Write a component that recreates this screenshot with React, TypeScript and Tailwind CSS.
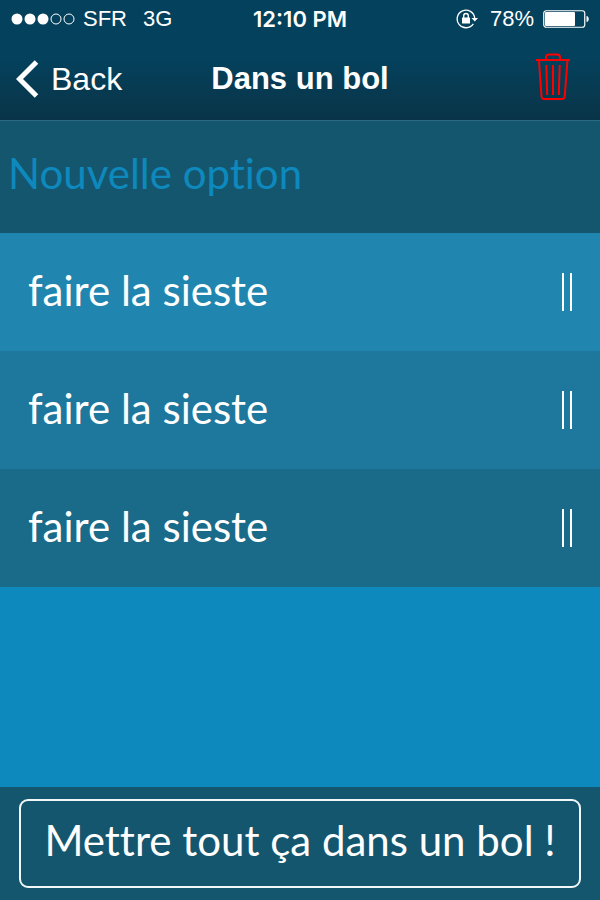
import { useState } from "react";

const options = ["faire la sieste", "faire la sieste", "faire la sieste"];
const rowColors = ["bg-[#2186af]", "bg-[#1e779c]", "bg-[#1a6a8a]"];

function SignalDots() {
  return (
    <svg width="64" height="12" viewBox="0 0 64 12" aria-hidden="true">
      {[6, 19, 32].map((x) => (
        <circle key={x} cx={x} cy="6" r="5.5" fill="#fff" />
      ))}
      {[45, 58].map((x) => (
        <circle key={x} cx={x} cy="6" r="5" fill="none" stroke="#fff" strokeWidth="1" />
      ))}
    </svg>
  );
}

function RotationLock() {
  return (
    <svg width="22" height="20" viewBox="0 0 22 20" fill="none" aria-hidden="true">
      <path d="M17.300 14.800A8.800 8.800 0 1 1 18.700 9" stroke="#fff" strokeWidth="1.300" />
      <path d="M15.500 9H22l-3.200 3.500z" fill="#fff" />
      <rect x="6" y="8.500" width="8" height="6" rx="0.500" fill="#fff" />
      <path d="M7.700 9V6.800a2.300 2.300 0 0 1 4.600 0V9" stroke="#fff" strokeWidth="1.400" />
    </svg>
  );
}

function Battery() {
  return (
    <svg width="46" height="18" viewBox="0 0 46 18" aria-hidden="true">
      <rect x="0.750" y="0.750" width="41" height="16.500" rx="2.500" fill="none" stroke="#fff" strokeWidth="1.200" />
      <rect x="2" y="2" width="30" height="14" rx="1" fill="#fff" />
      <path d="M43.500 6c3 .4 3 5.600 0 6z" fill="#fff" />
    </svg>
  );
}

function StatusBar() {
  return (
    <div className="grid h-[38px] grid-cols-[1fr_auto_1fr] items-center px-[11px] text-[22px] leading-6">
      <div className="flex items-center">
        <SignalDots />
        <span className="ml-2">SFR</span>
        <span className="ml-4">3G</span>
      </div>
      <span className="font-['Inter','Liberation_Sans',sans-serif] font-semibold">12:10 PM</span>
      <div className="flex items-center justify-end">
        <RotationLock />
        <span className="mr-[9px] ml-3">78%</span>
        <Battery />
      </div>
    </div>
  );
}

function NavBar() {
  return (
    <div className="grid h-[82px] grid-cols-[1fr_auto_1fr] items-center">
      <button type="button" className="flex items-center gap-3 justify-self-start pl-4 text-[32px] leading-10">
        <svg width="23" height="38" viewBox="0 0 23 38" fill="none" aria-hidden="true">
          <path d="M20.500 2L3.500 19l17 17" stroke="#fff" strokeWidth="5" />
        </svg>
        Back
      </button>
      <h1 className="text-[31px] leading-10 font-bold">Dans un bol</h1>
      <button type="button" aria-label="Supprimer" className="mr-[29px] justify-self-end pb-1">
        <svg width="36" height="48" viewBox="0 0 36 48" fill="none" stroke="#ff0000" strokeWidth="2" aria-hidden="true">
          <path d="M1 7h34" />
          <path d="M11 7V4.500Q11 1.500 14 1.500h8Q25 1.500 25 4.500V7" />
          <path d="M4 7.500l2.500 36Q6.800 46 9 46h18Q29.400 46 29.700 43.500L32.500 7.500" />
          <path d="M11.300 12l.9 30M18 12v30M24.700 12l-.9 30" />
        </svg>
      </button>
    </div>
  );
}

export default function App() {
  const [value, setValue] = useState("");
  return (
    <div className="flex min-h-screen flex-col bg-[#0e89bd] font-['Liberation_Sans',Arial,sans-serif] text-white">
      <header className="border-b border-[#2d6b85] bg-linear-to-b from-[#04415c] from-50% to-[#093447]">
        <StatusBar />
        <NavBar />
      </header>
      <main className="flex flex-1 flex-col font-['Lato',sans-serif] text-[42px] leading-[56px] [font-variant-ligatures:none]">
        <input
          type="text"
          aria-label="Nouvelle option"
          placeholder="Nouvelle option"
          value={value}
          onChange={(e) => setValue(e.target.value)}
          className="h-28 w-full bg-[#15566f] px-2 pb-2 text-white outline-none [font-variant-ligatures:none] placeholder:text-[#0e89bd] placeholder:opacity-100"
        />
        <ul>
          {options.map((option, i) => (
            <li key={i} className={`flex h-[118px] items-center justify-between px-7 ${rowColors[i]}`}>
              <span className="pb-1">{option}</span>
              <button type="button" aria-label="Déplacer" className="flex h-[38px] w-[10px] justify-between border-x-2 border-white" />
            </li>
          ))}
        </ul>
      </main>
      <footer className="bg-[#15566f] px-[19px] py-3 font-['Lato',sans-serif] text-[42px] leading-[56px]">
        <button type="button" className="h-[89px] w-full rounded-[9px] border-2 border-[#f2f7f9] pb-2 whitespace-nowrap [font-variant-ligatures:none]">
          Mettre tout ça dans un bol !
        </button>
      </footer>
    </div>
  );
}
